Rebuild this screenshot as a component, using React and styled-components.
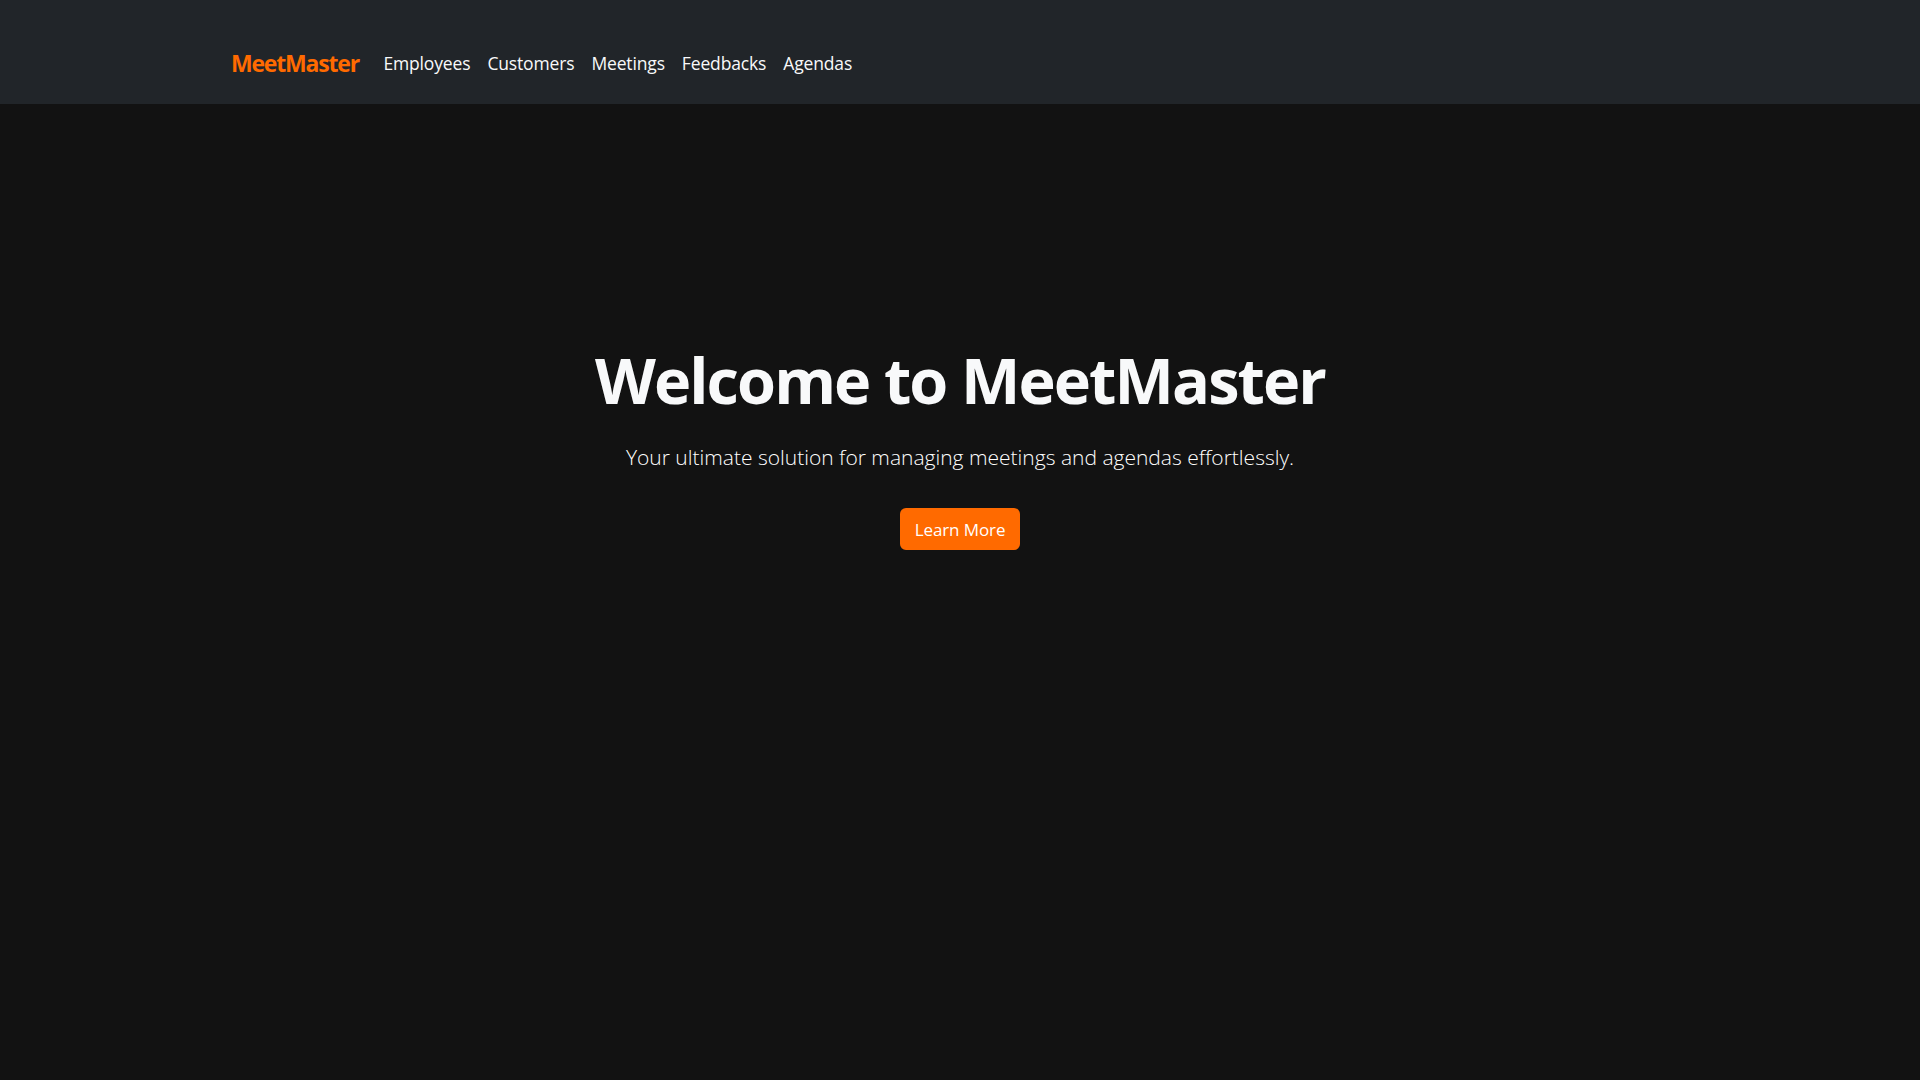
import React from "react";
import styled, { createGlobalStyle } from "styled-components";

const GlobalStyle = createGlobalStyle`
  html, body {
    margin: 0;
    padding: 0;
    background-color: #121212;
    font-family: "Open Sans", "Noto Sans", sans-serif;
    color: #f8f9fa;
  }
  * {
    box-sizing: border-box;
  }
`;

const Page = styled.div`
  min-height: 1080px;
  background-color: #121212;
`;

const NavBar = styled.nav`
  height: 104px;
  background-color: #212529;
  display: flex;
  align-items: center;
  padding: 22px 0 0 231px;
`;

const Brand = styled.a`
  color: #ff6a00;
  font-size: 23px;
  font-weight: 700;
  text-decoration: none;
  margin-right: 16px;
  letter-spacing: -1.2px;
`;

const NavList = styled.ul`
  list-style: none;
  display: flex;
  margin: 0;
  padding: 0;
`;

const NavItem = styled.li``;

const NavLink = styled.a`
  display: block;
  color: #f8f9fa;
  font-size: 17.5px;
  text-decoration: none;
  padding: 8px 8.5px;
  letter-spacing: -0.15px;
`;

const Hero = styled.section`
  display: flex;
  flex-direction: column;
  align-items: center;
  text-align: center;
  padding-top: 238px;
`;

const Title = styled.h1`
  margin: 0;
  font-size: 63px;
  font-weight: 700;
  line-height: 1.2;
  color: #f8f9fa;
  letter-spacing: -1.9px;
`;

const Lead = styled.p`
  margin: 24px 0 0;
  font-size: 21px;
  font-weight: 300;
  line-height: 1.5;
  color: #ffffff;
  letter-spacing: 0;
`;

const Button = styled.button`
  margin-top: 35px;
  height: 42px;
  width: 120px;
  border: none;
  border-radius: 6px;
  background-color: #ff6a00;
  color: #ffffff;
  font-family: inherit;
  font-size: 17px;
  cursor: pointer;
  letter-spacing: -0.1px;
`;

const links = ["Employees", "Customers", "Meetings", "Feedbacks", "Agendas"];

const App = () => {
  return (
    <Page>
      <GlobalStyle />
      <NavBar>
        <Brand href="#">MeetMaster</Brand>
        <NavList>
          {links.map((link) => (
            <NavItem key={link}>
              <NavLink href="#">{link}</NavLink>
            </NavItem>
          ))}
        </NavList>
      </NavBar>
      <Hero>
        <Title>Welcome to MeetMaster</Title>
        <Lead>Your ultimate solution for managing meetings and agendas effortlessly.</Lead>
        <Button>Learn More</Button>
      </Hero>
    </Page>
  );
};

export default App;
